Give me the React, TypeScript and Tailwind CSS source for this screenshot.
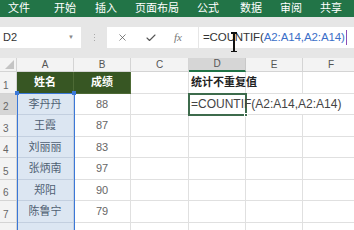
import { Check, X } from "lucide-react"

const tabs = [
  { label: "文件", ml: "ml-[8px]" },
  { label: "开始", ml: "ml-[24px]" },
  { label: "插入", ml: "ml-[19px]" },
  { label: "页面布局", ml: "ml-[18px]" },
  { label: "公式", ml: "ml-[18px]" },
  { label: "数据", ml: "ml-[21px]" },
  { label: "审阅", ml: "ml-[18px]" },
  { label: "共享", ml: "ml-[18px]" },
]

const rows = [
  { n: "2", name: "李丹丹", score: "88" },
  { n: "3", name: "王霞", score: "87" },
  { n: "4", name: "刘丽丽", score: "83" },
  { n: "5", name: "张炳南", score: "97" },
  { n: "6", name: "郑阳", score: "90" },
  { n: "7", name: "陈鲁宁", score: "79" },
  { n: "", name: "", score: "" },
]

const cols = ["A", "B", "C", "D", "E", "F"]

const cjk = "font-['Liberation_Sans','Noto_Sans_CJK_SC',sans-serif]"

function RowHead({ n, active }: { n: string; active?: boolean }) {
  return (
    <div
      className={`flex items-end border-b border-r border-[#d4d4d4] pb-[2px] pl-[3px] text-[10px] leading-none text-[#666] ${
        active ? "bg-[#d6d6d6]" : "bg-[#f3f3f3]"
      }`}
    >
      {n}
    </div>
  )
}

export default function App() {
  return (
    <div className={`relative h-[230px] w-[354px] overflow-hidden bg-[#e6e6e6] ${cjk}`}>
      {/* ribbon tabs */}
      <div className="flex h-[17px] items-center bg-[#227447] text-[11px] leading-none text-white">
        {tabs.map((t) => (
          <span key={t.label} className={`${t.ml} shrink-0`}>
            {t.label}
          </span>
        ))}
      </div>

      {/* formula bar */}
      <div className="mt-[10px] flex h-[21px]">
        <div className="flex w-[81px] items-center justify-between bg-white pl-[3px] pr-[7px] text-[11px] text-[#333]">
          <span>D2</span>
          <span className="text-[6px] text-[#888]">▼</span>
        </div>
        <div className="flex w-[26px] items-center justify-center">
          <div className="flex flex-col gap-[2px]">
            <span className="h-[1px] w-[1px] bg-[#aaa]" />
            <span className="h-[1px] w-[1px] bg-[#aaa]" />
            <span className="h-[1px] w-[1px] bg-[#aaa]" />
          </div>
        </div>
        <div className="flex w-[91px] items-center bg-white pl-[10px] text-[#555]">
          <X size={11} strokeWidth={1.6} />
          <Check size={12} strokeWidth={2.2} className="ml-[17px]" />
          <span className="ml-[17px] font-['Liberation_Serif',serif] text-[11px] italic text-[#777]">
            fx
          </span>
        </div>
        <div className="ml-[1px] flex flex-1 items-center bg-white pl-[4px] text-[11.5px] tracking-[-0.1px]">
          <span className="text-[#333]">=COUNTIF(</span>
          <span className="text-[#3c6fc8]">A2:A14,A2:A14)</span>
          <span className="ml-[1px] h-[15px] w-[1px] bg-[#8a4fb8]" />
        </div>
      </div>

      {/* sheet */}
      <div className="mt-[10px] grid grid-cols-[17px_57px_57px_58px_57px_57px_57px] grid-rows-[14px_repeat(8,21.5px)] bg-white text-[11px]">
        <div className="relative border-b border-r border-[#d4d4d4] bg-[#f3f3f3]">
          <div className="absolute bottom-[2px] right-[2px] h-0 w-0 border-b-[9px] border-l-[9px] border-b-[#c4c4c4] border-l-transparent" />
        </div>
        {cols.map((c) => (
          <div
            key={c}
            className={`flex items-center justify-center border-r text-[10px] leading-none text-[#555] ${
              c === "D"
                ? "border-b-2 border-b-[#217346] border-r-[#c8c8c8] bg-[#d6d6d6]"
                : "border-b border-[#d4d4d4] bg-[#f3f3f3]"
            }`}
          >
            {c}
          </div>
        ))}

        {/* row 1 */}
        <RowHead n="1" />
        <div className="flex items-center justify-center border-b border-r border-[#4d6a35] bg-[#375623] font-bold text-white">
          姓名
        </div>
        <div className="flex items-center justify-center border-b border-r border-[#4d6a35] bg-[#375623] font-bold text-white">
          成绩
        </div>
        <div className="border-b border-r border-[#e0e0e0]" />
        <div className="flex items-center whitespace-nowrap border-b border-r border-[#e0e0e0] pl-[2px] font-bold text-[#222]">
          统计不重复值
        </div>
        <div className="border-b border-r border-[#e0e0e0]" />
        <div className="border-b border-r border-[#e0e0e0]" />

        {rows.map((r, i) => (
          <div key={i} className="contents">
            <RowHead n={r.n} active={r.n === "2"} />
            <div className="flex items-center justify-center border-b border-r border-[#c3cfdf] bg-[#dce6f2] text-[#4f5f73]">
              {r.name}
            </div>
            <div className="flex items-center justify-center border-b border-r border-[#e0e0e0] text-[#666]">
              {r.score}
            </div>
            <div className="border-b border-r border-[#e0e0e0]" />
            <div className="relative flex items-center overflow-visible whitespace-nowrap border-b border-r border-[#e0e0e0] pl-[2px] text-[12px] text-[#444]">
              {r.n === "2" && <span className="relative z-10">=COUNTIF(A2:A14,A2:A14)</span>}
            </div>
            <div className={`border-b border-[#e0e0e0] ${r.n === "2" ? "" : "border-r"}`} />
            <div className="border-b border-r border-[#e0e0e0]" />
          </div>
        ))}
      </div>

      {/* reference range A2:A14 */}
      <div className="pointer-events-none absolute left-[17px] top-[93px] h-[140px] w-[58px] border-l-[1.5px] border-r-[1.5px] border-t-[1.5px] border-[#3b78d8]" />
      <div className="absolute left-[15px] top-[91px] h-[4px] w-[4px] bg-[#3b78d8]" />
      <div className="absolute left-[72px] top-[91px] h-[4px] w-[4px] bg-[#3b78d8]" />

      {/* active cell D2 */}
      <div className="pointer-events-none absolute left-[188px] top-[93px] h-[23px] w-[59px] border-2 border-[#3d6b4c]" />
      <div className="absolute left-[244px] top-[113px] h-[4px] w-[4px] border border-white bg-[#3d6b4c]" />

      {/* I-beam mouse cursor */}
      <div className="pointer-events-none absolute left-[231px] top-[32px] flex h-[20px] w-[6px] flex-col items-center">
        <span className="h-[1.5px] w-[6px] bg-[#111]" />
        <span className="w-[1.5px] flex-1 bg-[#111]" />
        <span className="h-[1.5px] w-[6px] bg-[#111]" />
      </div>
    </div>
  )
}
